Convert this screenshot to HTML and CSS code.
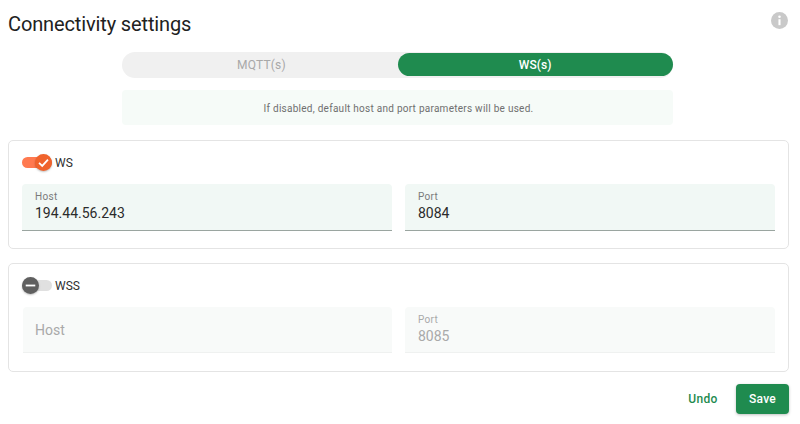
FILE: index.html
```html
<!DOCTYPE html>
<html lang="en">
<head>
<meta charset="utf-8">
<title>Connectivity settings</title>
<link rel="stylesheet" href="styles.css">
</head>
<body>
<main class="page">
  <header class="head">
    <h1 class="title">Connectivity settings</h1>
    <svg class="info" viewBox="0 0 16 16" width="17" height="17"><circle cx="8" cy="8" r="8" fill="#c9c9c9"/><circle cx="8" cy="4.4" r="1.2" fill="#fff"/><rect x="7" y="6.8" width="2" height="5.6" fill="#fff"/></svg>
  </header>
  <div class="tabs">
    <div class="tab">MQTT(s)</div>
    <div class="tab active">WS(s)</div>
  </div>
  <div class="notice">If disabled, default host and port parameters will be used.</div>
  <section class="card">
    <div class="switch-row">
      <span class="switch on">
        <span class="knob"><svg viewBox="0 0 16 16" width="17" height="17"><path d="M3.8 8.4 6.8 11.2 12.2 5.4" fill="none" stroke="#fff" stroke-width="1.7"/></svg></span>
      </span>
      <span class="switch-label">WS</span>
    </div>
    <div class="fields">
      <div class="field"><span class="label">Host</span><span class="value">194.44.56.243</span></div>
      <div class="field"><span class="label">Port</span><span class="value">8084</span></div>
    </div>
  </section>
  <section class="card">
    <div class="switch-row">
      <span class="switch off">
        <span class="knob"><svg viewBox="0 0 16 16" width="17" height="17"><path d="M3.5 8H12.5" fill="none" stroke="#fff" stroke-width="1.7"/></svg></span>
      </span>
      <span class="switch-label">WSS</span>
    </div>
    <div class="fields">
      <div class="field disabled empty"><span class="placeholder">Host</span></div>
      <div class="field disabled"><span class="label">Port</span><span class="value">8085</span></div>
    </div>
  </section>
  <footer class="actions">
    <button class="btn text">Undo</button>
    <button class="btn primary">Save</button>
  </footer>
</main>
</body>
</html>
```
FILE: styles.css
```css
* { box-sizing: border-box; }
html, body { margin: 0; padding: 0; background: #fff; }
body { width: 800px; height: 424px; overflow: hidden; font-family: Roboto, "Liberation Sans", sans-serif; color: #212121; }
.page { padding: 8px 11px 0 8px; }
.head { display: flex; justify-content: space-between; align-items: flex-start; height: 44px; }
.title { margin: 0; font-size: 20px; line-height: 32px; font-weight: 400; letter-spacing: -0.13px; color: #212121; }
.info { margin: 4px 1px 0 0; }
.tabs { display: flex; width: 551px; height: 26px; margin: 0 0 0 114px; background: #f0f0f0; border-radius: 13px; }
.tab { flex: 1; display: flex; align-items: center; justify-content: center; padding-left: 3px; font-size: 12px; letter-spacing: 0.2px; color: #a8a8a8; border-radius: 12px; }
.tab.active { flex: 0 0 274.5px; padding-left: 0; font-weight: 500; letter-spacing: 0.1px; background: #1f8b4f; color: #fff; margin: 1px 0.5px 2px 0; }
.notice { width: 551px; height: 35px; margin: 12px 0 15px 114px; padding: 1px 0 0 2px; display: flex; align-items: center; justify-content: center; background: #f6fbf8; border-radius: 4px; font-size: 10px; letter-spacing: 0.26px; color: #6f6f6f; }
.card { border: 1px solid #e4e4e4; border-radius: 5px; height: 109px; padding: 0 13px; margin-bottom: 14px; }
.switch-row { display: flex; align-items: center; height: 43px; gap: 3px; }
.switch { position: relative; display: block; width: 30px; height: 11px; border-radius: 6px; }
.switch.on { background: #ff7a50; }
.switch.off { background: #e0e0e0; }
.knob { position: absolute; top: -3px; width: 17px; height: 17px; border-radius: 50%; display: block; box-shadow: 0 1px 2px rgba(0,0,0,.25); }
.knob svg { display: block; }
.on .knob { right: 0; background: #f0632c; }
.off .knob { left: 0; background: #5f5f5f; }
.switch-label { font-size: 12px; color: #2f2f2f; }
.fields { display: grid; grid-template-columns: 370px 370px; column-gap: 13px; }
.field { height: 47px; display: flex; flex-direction: column; padding: 7px 13px 0; background: #f1f8f5; border-bottom: 1px solid #9aa5a0; border-radius: 4px 4px 0 0; }
.label { font-size: 10px; line-height: 11px; letter-spacing: 0.3px; color: #7a7a7a; }
.value { font-size: 14px; line-height: 21px; margin-top: 1px; color: #2b2b2b; }
.field.disabled { background: #f8faf9; border-bottom-color: #eff1f0; height: 46px; }
.field.disabled .label, .field.disabled .value { color: #a9a9a9; }
.field.empty { justify-content: center; padding-top: 0; padding-left: 12px; margin-left: 1px; }
.placeholder { font-size: 14px; color: #a9a9a9; }
.actions { display: flex; justify-content: flex-end; gap: 11px; margin-top: -2px; }
.btn { height: 30px; border: 0; border-radius: 4px; font: 500 12px Roboto, "Liberation Sans", sans-serif; letter-spacing: 0.3px; padding: 0; }
.btn.text { width: 44px; background: transparent; color: #1f8b4f; }
.btn.primary { width: 53px; background: #1f8b4f; color: #fff; box-shadow: 0 1px 3px rgba(0,0,0,.25); }
```
